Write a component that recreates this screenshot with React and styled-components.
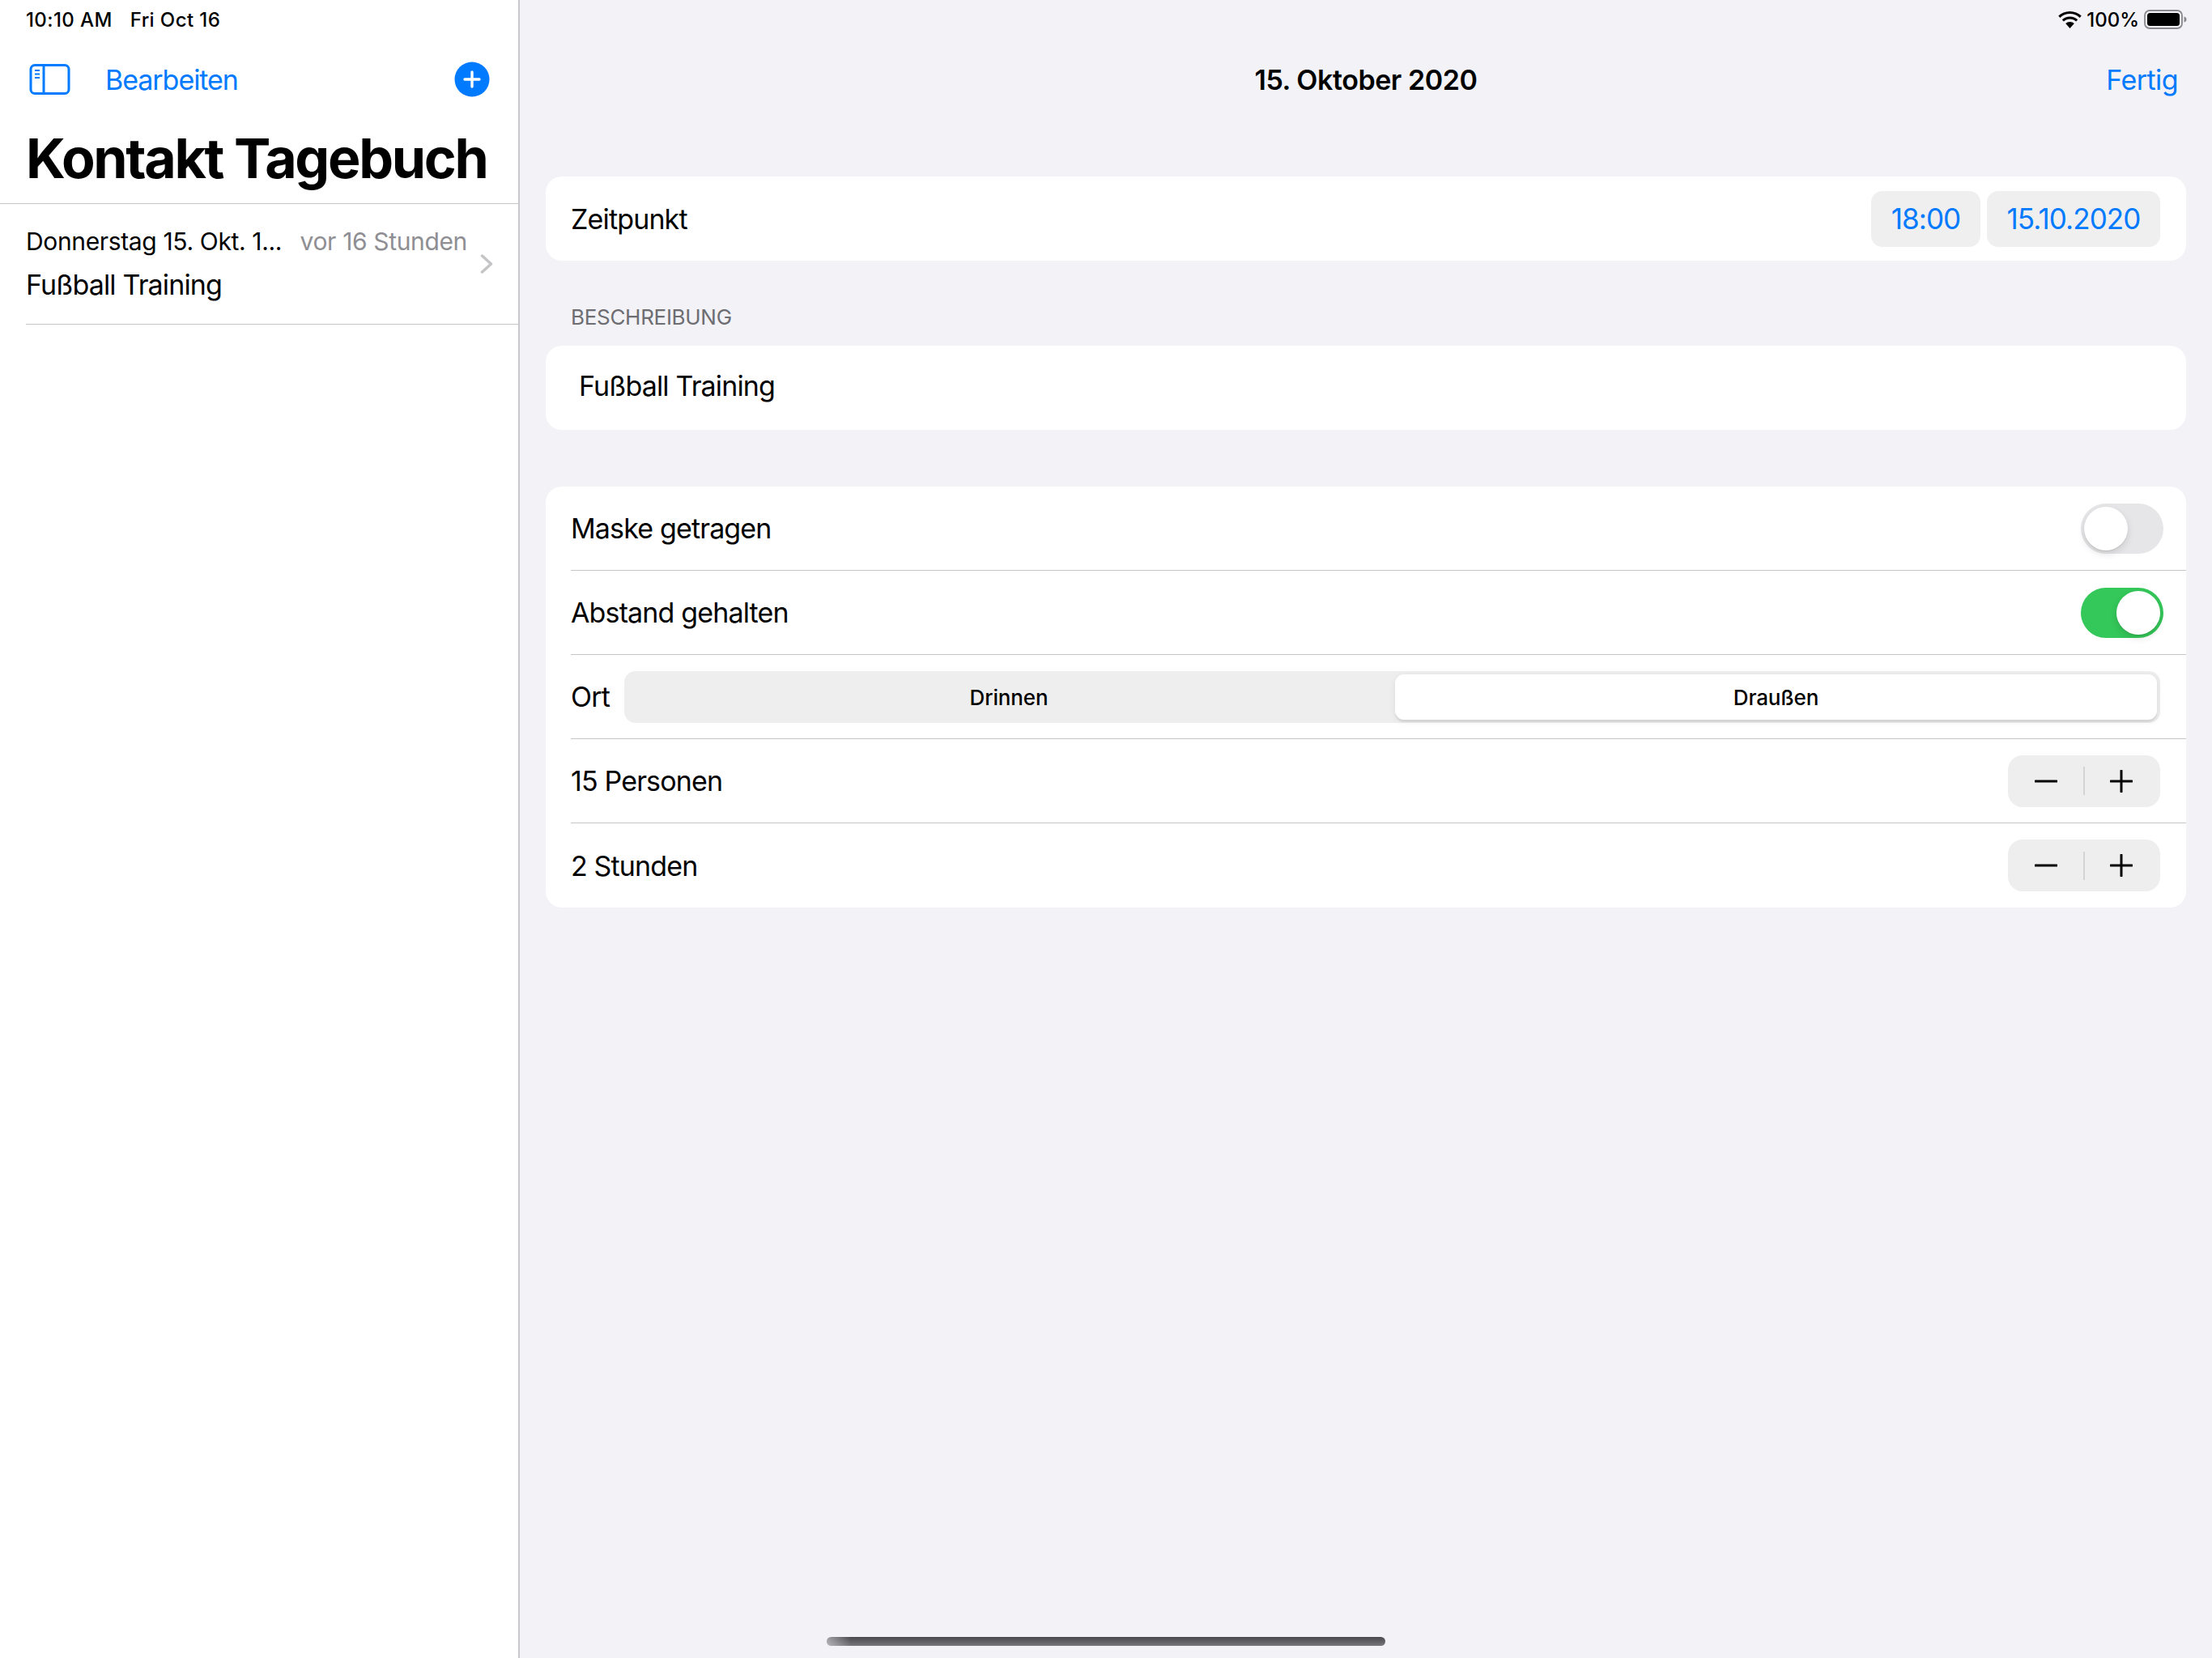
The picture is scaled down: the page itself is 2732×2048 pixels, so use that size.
import React from "react";
import styled, { createGlobalStyle } from "styled-components";

const Global = createGlobalStyle`
  html, body { margin: 0; padding: 0; background: #f2f2f7; }
  body { font-family: Inter, "Noto Sans", "Liberation Sans", sans-serif; color: #000; }
  * { box-sizing: border-box; }
`;

const Page = styled.div`
  position: relative;
  width: 2732px;
  height: 2048px;
  display: flex;
  overflow: hidden;
  background: #f2f2f7;
`;
const Sidebar = styled.aside`
  width: 642px;
  flex: none;
  background: #fff;
  border-right: 2px solid #c9c9cd;
  display: flex;
  flex-direction: column;
`;
const Main = styled.main`
  flex: 1;
  min-width: 0;
  display: flex;
  flex-direction: column;
`;
const StatusBar = styled.div`
  height: 48px;
  padding: 0 ${p => (p.$right ? "30px" : "0")} 0 32px;
  display: flex;
  align-items: center;
  justify-content: ${p => (p.$right ? "flex-end" : "flex-start")};
  gap: ${p => (p.$right ? "6px" : "22px")};
  font-size: 24px;
  font-weight: 500;
  letter-spacing: ${p => (p.$right ? "0" : "0.4px")};
`;
const SideNav = styled.div`
  height: 100px;
  display: flex;
  align-items: center;
  padding: 0 35px 0 36px;
`;
const NavLink = styled.span`
  font-size: 34px;
  letter-spacing: ${p => p.$ls || "-0.55px"};
  color: #007aff;
  margin-left: ${p => p.$ml || 0};
`;
const Spacer = styled.div`
  flex: 1;
`;
const Title = styled.h1`
  margin: 0;
  height: 104px;
  padding: 7px 0 0 32px;
  font-size: 68px;
  line-height: 80px;
  font-weight: 700;
  letter-spacing: -2.3px;
  border-bottom: 1px solid #c6c6c8;
`;
const ListItem = styled.div`
  margin-left: 32px;
  height: 149px;
  border-bottom: 1px solid #c6c6c8;
  display: flex;
  align-items: center;
  padding: 0 31px 0 0;
`;
const ItemBody = styled.div`
  flex: 1;
  min-width: 0;
  display: flex;
  flex-direction: column;
  gap: 15px;
  padding-top: 1px;
`;
const ItemTop = styled.div`
  display: flex;
  justify-content: space-between;
  padding-right: 16px;
  font-size: 30px;
  line-height: 36px;
  letter-spacing: -0.35px;
`;
const Muted = styled.span`
  color: #8e8e93;
`;
const ItemTitle = styled.div`
  font-size: 34px;
  line-height: 42px;
  letter-spacing: -0.85px;
`;
const DetailNav = styled.div`
  height: 100px;
  display: grid;
  grid-template-columns: 1fr auto 1fr;
  align-items: center;
  padding: 0 42px;
`;
const DetailTitle = styled.div`
  grid-column: 2;
  font-size: 34px;
  font-weight: 600;
  letter-spacing: -0.45px;
`;
const DetailAction = styled.div`
  grid-column: 3;
  display: flex;
  justify-content: flex-end;
`;
const Content = styled.div`
  padding: 70px 32px 0;
  display: flex;
  flex-direction: column;
`;
const Card = styled.section`
  background: #fff;
  border-radius: 20px;
  margin-bottom: ${p => p.$mb || "0"};
`;
const Row = styled.div`
  height: 104px;
  margin-left: 31px;
  padding-right: ${p => p.$pr || "32px"};
  display: flex;
  align-items: center;
  gap: ${p => p.$gap || "0"};
  font-size: 34px;
  letter-spacing: -0.85px;
  border-bottom: ${p => (p.$last ? "0" : "1px solid #c6c6c8")};
`;
const RowLabel = styled.span`
  flex: ${p => (p.$fit ? "none" : "1")};
`;
const Chip = styled.span`
  height: 69px;
  width: ${p => p.$w};
  margin-left: 8px;
  background: #efeff0;
  border-radius: 14px;
  color: #007aff;
  font-size: 35px;
  letter-spacing: -0.9px;
  display: flex;
  align-items: center;
  justify-content: center;
`;
const SectionHeader = styled.div`
  height: 105px;
  padding: 0 0 20px 31px;
  display: flex;
  align-items: flex-end;
  justify-content: flex-start;
  color: #6d6d72;
  font-size: 26px;
  letter-spacing: -0.3px;
  text-transform: uppercase;
`;
const TextField = styled.div`
  height: 104px;
  padding: 0 0 6px 41px;
  display: flex;
  align-items: center;
  font-size: 34px;
  letter-spacing: -0.85px;
`;
const Toggle = styled.span`
  width: 102px;
  height: 62px;
  border-radius: 31px;
  padding: 4px;
  display: flex;
  justify-content: ${p => (p.$on ? "flex-end" : "flex-start")};
  background: ${p => (p.$on ? "#34c759" : "#e6e6e8")};
`;
const Thumb = styled.span`
  width: 54px;
  height: 54px;
  border-radius: 50%;
  background: #fff;
  box-shadow: 0 4px 10px rgba(0, 0, 0, 0.12), 0 1px 1px rgba(0, 0, 0, 0.1);
`;
const Segments = styled.div`
  flex: 1;
  height: 64px;
  background: #eeeeef;
  border-radius: 14px;
  padding: 4px;
  display: flex;
  font-size: 26px;
  font-weight: 500;
  letter-spacing: -0.15px;
`;
const Segment = styled.span`
  display: flex;
  align-items: center;
  justify-content: center;
  padding-top: 1px;
  ${p =>
    p.$active
      ? `width: 941px; flex: none; background: #fff; border-radius: 11px; box-shadow: 0 3px 0 rgba(0,0,0,.06), 0 2px 8px rgba(0,0,0,.08);`
      : `flex: 1; padding-right: 6px;`}
`;
const Stepper = styled.div`
  width: 188px;
  height: 64px;
  background: #eeeeef;
  border-radius: 18px;
  display: flex;
  align-items: center;
`;
const StepButton = styled.span`
  flex: 0 0 93px;
  display: flex;
  align-items: center;
  justify-content: center;
  padding-right: ${p => (p.$plus ? "3px" : "0")};
`;
const StepDivider = styled.span`
  width: 2px;
  height: 35px;
  background: #d4d4d6;
`;
const HomeBar = styled.div`
  position: absolute;
  left: 1021px;
  top: 2022px;
  width: 690px;
  height: 11px;
  border-radius: 6px;
  background: linear-gradient(90deg, rgba(242, 242, 247, 0.5), rgba(242, 242, 247, 0) 30px),
    linear-gradient(180deg, #4a4a4d, #77777c);
`;

const SidebarIcon = () => (
  <svg width="52" height="40" viewBox="0 0 52 40" fill="none">
    <rect x="2" y="2.500" width="47" height="35" rx="5" stroke="#007aff" strokeWidth="3" />
    <path d="M18 2.500v35" stroke="#007aff" strokeWidth="3" />
    <path d="M7 9h6M7 13.500h6M7 18h6" stroke="#007aff" strokeWidth="2.200" />
  </svg>
);
const AddIcon = () => (
  <svg width="44" height="44" viewBox="0 0 44 44">
    <circle cx="22" cy="22" r="21.500" fill="#007aff" />
    <path d="M22 13v18M13 22h18" stroke="#fff" strokeWidth="3.400" strokeLinecap="round" />
  </svg>
);
const Chevron = () => (
  <svg width="16" height="24" viewBox="0 0 16 24" fill="none">
    <path d="M2.500 2l11 10-11 10" stroke="#c4c4c7" strokeWidth="3.400" strokeLinecap="round" strokeLinejoin="round" />
  </svg>
);
const Wifi = () => (
  <svg width="29" height="21" viewBox="0 0 29 21" fill="#000">
    <path d="M14.500 0C9 0 4 2.100.3 5.600l2.100 2.300C5.500 4.900 9.800 3.100 14.500 3.100s9 1.800 12.100 4.800l2.100-2.300C25 2.100 20 0 14.500 0z" />
    <path d="M14.500 6.500c-3.800 0-7.200 1.400-9.700 3.800l2.100 2.300c2-1.900 4.700-3 7.600-3s5.600 1.100 7.600 3l2.100-2.300c-2.500-2.400-5.900-3.800-9.700-3.800z" />
    <path d="M14.500 13c-2.100 0-4 .8-5.300 2.100l5.300 5.900 5.300-5.900C18.500 13.800 16.600 13 14.500 13z" />
  </svg>
);
const Battery = () => (
  <svg width="54" height="24" viewBox="0 0 54 24">
    <rect x="1" y="1" width="46" height="22" rx="6" fill="none" stroke="#8a8a8d" strokeWidth="1.800" />
    <rect x="4" y="4" width="40" height="16" rx="3.500" fill="#000" />
    <path d="M49.500 8.500c2 .5 3 1.800 3 3.500s-1 3-3 3.500z" fill="#8a8a8d" />
  </svg>
);
const Minus = () => (
  <svg width="28" height="28" viewBox="0 0 28 28">
    <path d="M1 14h26" stroke="#000" strokeWidth="3" strokeLinecap="round" />
  </svg>
);
const Plus = () => (
  <svg width="28" height="28" viewBox="0 0 28 28">
    <path d="M1 14h26M14 1v26" stroke="#000" strokeWidth="3" strokeLinecap="round" />
  </svg>
);

const StepControl = () => (
  <Stepper>
    <StepButton><Minus /></StepButton>
    <StepDivider />
    <StepButton $plus><Plus /></StepButton>
  </Stepper>
);

export default function App() {
  return (
    <Page>
      <Global />
      <Sidebar>
        <StatusBar>
          <span>10:10 AM</span>
          <span>Fri Oct 16</span>
        </StatusBar>
        <SideNav>
          <SidebarIcon />
          <NavLink $ml="42px" $ls="-1.05px">Bearbeiten</NavLink>
          <Spacer />
          <AddIcon />
        </SideNav>
        <Title>Kontakt Tagebuch</Title>
        <ListItem>
          <ItemBody>
            <ItemTop>
              <span>Donnerstag 15. Okt. 1...</span>
              <Muted>vor 16 Stunden</Muted>
            </ItemTop>
            <ItemTitle>Fußball Training</ItemTitle>
          </ItemBody>
          <Chevron />
        </ListItem>
      </Sidebar>
      <Main>
        <StatusBar $right>
          <Wifi />
          <span>100%</span>
          <Battery />
        </StatusBar>
        <DetailNav>
          <DetailTitle>15. Oktober 2020</DetailTitle>
          <DetailAction>
            <NavLink>Fertig</NavLink>
          </DetailAction>
        </DetailNav>
        <Content>
          <Card>
            <Row $last>
              <RowLabel>Zeitpunkt</RowLabel>
              <Chip $w="135px">18:00</Chip>
              <Chip $w="214px">15.10.2020</Chip>
            </Row>
          </Card>
          <SectionHeader>Beschreibung</SectionHeader>
          <Card $mb="70px">
            <TextField>Fußball Training</TextField>
          </Card>
          <Card>
            <Row $pr="28px">
              <RowLabel>Maske getragen</RowLabel>
              <Toggle><Thumb /></Toggle>
            </Row>
            <Row $pr="28px">
              <RowLabel>Abstand gehalten</RowLabel>
              <Toggle $on><Thumb /></Toggle>
            </Row>
            <Row $gap="18px">
              <RowLabel $fit>Ort</RowLabel>
              <Segments>
                <Segment>Drinnen</Segment>
                <Segment $active>Draußen</Segment>
              </Segments>
            </Row>
            <Row>
              <RowLabel>15 Personen</RowLabel>
              <StepControl />
            </Row>
            <Row $last>
              <RowLabel>2 Stunden</RowLabel>
              <StepControl />
            </Row>
          </Card>
        </Content>
      </Main>
      <HomeBar />
    </Page>
  );
}
